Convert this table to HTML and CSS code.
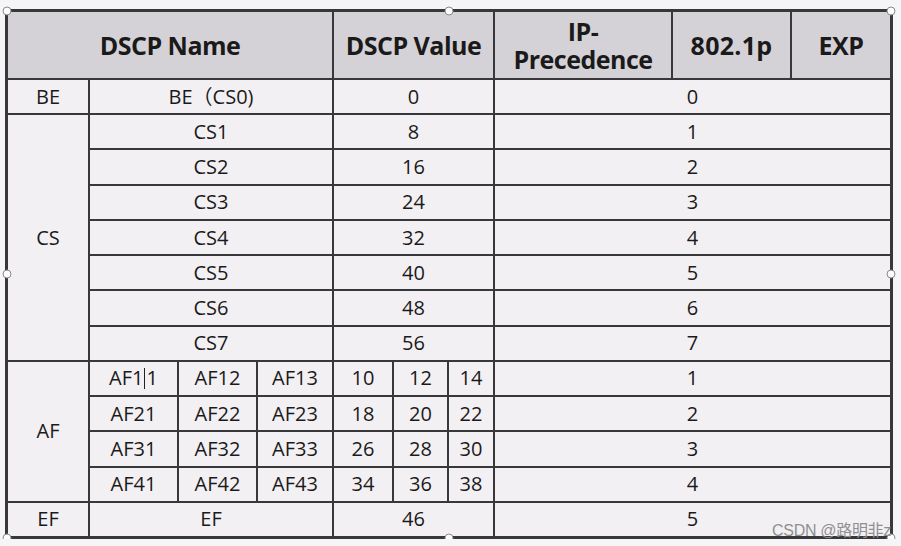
FILE: index.html
```html
<!DOCTYPE html>
<html lang="en">
<head>
<meta charset="utf-8">
<title>DSCP</title>
<link rel="stylesheet" href="styles.css">
</head>
<body>
<div class="frame">
  <div class="grid">
    <div class="cell head span4">DSCP Name</div>
    <div class="cell head span3">DSCP Value</div>
    <div class="cell head two">IP-<br>Precedence</div>
    <div class="cell head semi">802.1p</div>
    <div class="cell head">EXP</div>

    <div class="cell">BE</div>
    <div class="cell span3">BE（CS0)</div>
    <div class="cell span3">0</div>
    <div class="cell span3">0</div>

    <div class="cell rows7">CS</div>
    <div class="cell span3">CS1</div><div class="cell span3">8</div><div class="cell span3">1</div>
    <div class="cell span3">CS2</div><div class="cell span3">16</div><div class="cell span3">2</div>
    <div class="cell span3">CS3</div><div class="cell span3">24</div><div class="cell span3">3</div>
    <div class="cell span3">CS4</div><div class="cell span3">32</div><div class="cell span3">4</div>
    <div class="cell span3">CS5</div><div class="cell span3">40</div><div class="cell span3">5</div>
    <div class="cell span3">CS6</div><div class="cell span3">48</div><div class="cell span3">6</div>
    <div class="cell span3">CS7</div><div class="cell span3">56</div><div class="cell span3">7</div>

    <div class="cell rows4">AF</div>
    <div class="cell">AF1<span class="caret"></span>1</div><div class="cell">AF12</div><div class="cell">AF13</div>
    <div class="cell">10</div><div class="cell">12</div><div class="cell">14</div><div class="cell span3">1</div>
    <div class="cell">AF21</div><div class="cell">AF22</div><div class="cell">AF23</div>
    <div class="cell">18</div><div class="cell">20</div><div class="cell">22</div><div class="cell span3">2</div>
    <div class="cell">AF31</div><div class="cell">AF32</div><div class="cell">AF33</div>
    <div class="cell">26</div><div class="cell">28</div><div class="cell">30</div><div class="cell span3">3</div>
    <div class="cell">AF41</div><div class="cell">AF42</div><div class="cell">AF43</div>
    <div class="cell">34</div><div class="cell">36</div><div class="cell">38</div><div class="cell span3">4</div>

    <div class="cell">EF</div>
    <div class="cell span3">EF</div>
    <div class="cell span3">46</div>
    <div class="cell span3">5</div>
  </div>
  <span class="handle h-tl"></span>
  <span class="handle h-tc"></span>
  <span class="handle h-tr"></span>
  <span class="handle h-ml"></span>
  <span class="handle h-mr"></span>
  <span class="handle h-bl"></span>
  <span class="handle h-bc"></span>
  <span class="handle h-br"></span>
  <span class="watermark">CSDN @路明非z</span>
</div>
</body>
</html>
```

FILE: styles.css
```css
html, body {
  margin: 0;
  padding: 0;
  background: #f5f4f6;
}

body {
  font-family: "Open Sans", "Noto Sans CJK SC", sans-serif;
  color: #1a1a1a;
}

.frame {
  position: relative;
  width: 888px;
  height: 530px;
  margin: 9px 0 0 5px;
  box-sizing: border-box;
}

.grid {
  display: grid;
  box-sizing: border-box;
  width: 100%;
  height: 100%;
  padding: 3px;
  gap: 2px;
  background: #38383a;
  grid-template-columns: 80px 87px 77px 74px 58px 53px 44px 176px 117px 98px;
  grid-template-rows: 66px repeat(13, 1fr);
}

.cell {
  display: flex;
  align-items: center;
  justify-content: center;
  background: #f3f0f4;
  font-size: 20px;
  line-height: 1;
  white-space: nowrap;
}

.head {
  background: #d5d2d7;
  font-weight: 700;
  font-size: 25px;
  letter-spacing: -0.5px;
  color: #1a1a1a;
}

.semi {
  letter-spacing: 0.3px;
}

.two {
  text-align: center;
  line-height: 28px;
}

.span3 { grid-column: span 3; }
.span4 { grid-column: span 4; }
.rows7 { grid-row: span 7; }
.rows4 { grid-row: span 4; }

.caret {
  display: inline-block;
  width: 1px;
  height: 21px;
  background: #222;
  margin: 0 1px;
  vertical-align: middle;
}

.handle {
  position: absolute;
  width: 7px;
  height: 7px;
  border: 1px solid #8a8a8a;
  border-radius: 50%;
  background: #fbfbfb;
  transform: translate(-50%, -50%);
}

.h-tl { left: 2px; top: 1.5px; }
.h-tc { left: 444px; top: 1.5px; }
.h-tr { left: 886px; top: 1.5px; }
.h-ml { left: 2px; top: 265px; }
.h-mr { left: 886px; top: 265px; }
.h-bl { left: 2px; top: 529px; }
.h-bc { left: 444px; top: 529px; }
.h-br { left: 886px; top: 529px; }

.watermark {
  position: absolute;
  left: 767px;
  top: 508px;
  font-family: "Liberation Sans", "Noto Sans CJK SC", sans-serif;
  font-size: 16px;
  color: #8f8f92;
  letter-spacing: -0.3px;
}
```
